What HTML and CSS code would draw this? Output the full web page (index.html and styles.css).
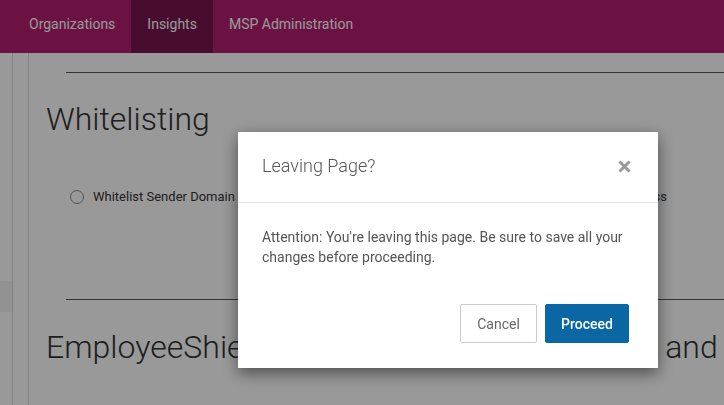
FILE: index.html
```html
<!DOCTYPE html>
<html lang="en">
<head>
<meta charset="utf-8">
<title>Leaving Page?</title>
<link rel="stylesheet" href="styles.css">
</head>
<body>
<header class="topnav">
  <a class="nav-item">Organizations</a>
  <a class="nav-item active">Insights</a>
  <a class="nav-item">MSP Administration</a>
</header>
<div class="layout">
  <aside class="sidebar">
    <div class="side-item"></div>
  </aside>
  <div class="rail"></div>
  <main class="content">
    <hr class="divider first">
    <h1 class="section-title">Whitelisting</h1>
    <div class="radio-row">
      <label class="radio"><span class="radio-dot"></span>Whitelist Sender Domain</label>
      <label class="radio"><span class="radio-dot"></span>Whitelist Sender Email Address</label>
    </div>
    <hr class="divider second">
    <h1 class="section-title second-title">EmployeeShield Warning Banner Exclusions and Whitelisting</h1>
  </main>
</div>

<div class="backdrop"></div>
<div class="modal" role="dialog">
  <div class="modal-header">
    <h2 class="modal-title">Leaving Page?</h2>
    <button class="close" aria-label="Close">
      <svg width="13" height="13" viewBox="0 0 13 13"><path d="M1.5 1.5 L11.5 11.5 M11.5 1.5 L1.5 11.5" stroke="#999" stroke-width="3" stroke-linecap="butt" fill="none"/></svg>
    </button>
  </div>
  <div class="modal-body">
    Attention: You're leaving this page. Be sure to save all your changes before proceeding.
  </div>
  <div class="modal-footer">
    <button class="btn btn-default">Cancel</button>
    <button class="btn btn-primary">Proceed</button>
  </div>
</div>
</body>
</html>
```

FILE: styles.css
```css
html, body {
  margin: 0;
  height: 405px;
  overflow: hidden;
}
body {
  font-family: Roboto, "Liberation Sans", sans-serif;
  background: #fff;
  color: #333;
}
.topnav {
  display: flex;
  height: 53px;
  background: #b21e71;
  padding-left: 13px;
  box-sizing: border-box;
}
.nav-item {
  display: block;
  padding: 15px 16px 0;
  font-size: 14px;
  line-height: 18px;
  color: #fff;
}
.nav-item.active {
  background: #78164d;
}
.layout {
  display: flex;
  height: 352px;
}
.sidebar {
  width: 12px;
  border-right: 1px solid #ddd;
  padding-top: 228px;
}
.side-item {
  height: 31px;
  background: #f4f4f4;
}
.rail {
  width: 15px;
  border-right: 1px solid #ddd;
}
.content {
  flex: 1;
  padding-left: 17px;
  overflow: hidden;
}
.divider {
  border: 0;
  border-top: 1px solid #555;
  margin: 0 0 0 20px;
}
.divider.first {
  margin-top: 19px;
}
.section-title {
  font-size: 32px;
  font-weight: 300;
  line-height: 37px;
  margin: 28px 0 0;
  color: #333;
  white-space: nowrap;
}
.radio-row {
  display: flex;
  justify-content: space-between;
  margin: 51px 57px 0 24px;
}
.radio {
  display: flex;
  align-items: center;
  font-size: 13px;
  line-height: 16px;
  color: #333;
}
.radio-dot {
  width: 12px;
  height: 12px;
  border: 1px solid #888;
  border-radius: 50%;
  margin-right: 9px;
}
.divider.second {
  margin-top: 94px;
}
.second-title {
  margin-top: 29px;
}
.backdrop {
  position: fixed;
  inset: 0;
  background: rgba(0, 0, 0, 0.4);
}
.modal {
  position: fixed;
  left: 238px;
  top: 132px;
  width: 420px;
  background: #fff;
  box-shadow: 0 5px 15px rgba(0, 0, 0, 0.5);
}
.modal-header {
  display: flex;
  align-items: center;
  justify-content: space-between;
  padding: 23px 27px 25px 24px;
  border-bottom: 1px solid #e5e5e5;
}
.modal-title {
  margin: 0;
  font-size: 18px;
  font-weight: 300;
  line-height: 22px;
  color: #555;
}
.close {
  border: 0;
  background: none;
  padding: 0;
  width: 13px;
  height: 13px;
  display: flex;
}
.modal-body {
  padding: 24px 24px 0;
  font-size: 14px;
  line-height: 20px;
  color: #555;
}
.modal-footer {
  display: flex;
  justify-content: flex-end;
  gap: 8px;
  padding: 37px 29px 25px;
}
.btn {
  height: 39px;
  font-family: Roboto, "Liberation Sans", sans-serif;
  font-size: 14px;
  border-radius: 2px;
  box-sizing: border-box;
}
.btn-default {
  padding: 0 16px;
  width: 77px;
  background: #fff;
  border: 1px solid #ccc;
  color: #666;
}
.btn-primary {
  padding: 0 15px;
  width: 84px;
  background: #0b67a4;
  border: 1px solid #0b67a4;
  color: #fff;
  font-weight: 500;
}
```
